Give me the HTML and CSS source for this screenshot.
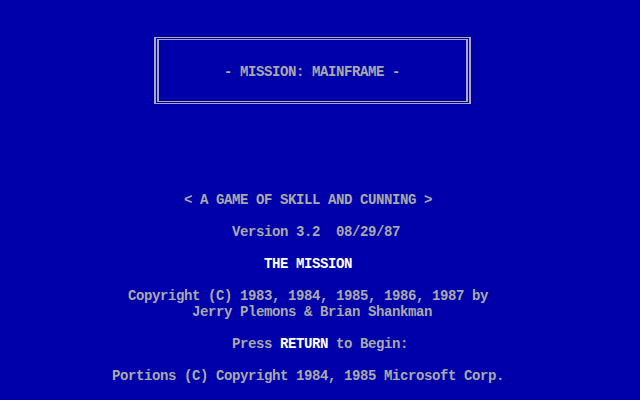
FILE: index.html
```html
<!DOCTYPE html>
<html>
<head>
<meta charset="utf-8">
<link rel="stylesheet" href="styles.css">
</head>
<body>
<div class="screen">
  <div class="box">
    <div class="box-inner">
      <div class="title">- MISSION: MAINFRAME -</div>
    </div>
  </div>
  <div class="text">
    <div class="line c23">&lt; A GAME OF SKILL AND CUNNING &gt;</div>
    <div class="line gap c29">Version 3.2  08/29/87</div>
    <div class="line gap c33"><span class="hi">THE MISSION</span></div>
    <div class="line gap c16">Copyright (C) 1983, 1984, 1985, 1986, 1987 by</div>
    <div class="line c24">Jerry Plemons &amp; Brian Shankman</div>
    <div class="line gap c29"><span>Press </span><span class="hi">RETURN</span><span> to Begin:</span></div>
    <div class="line gap c14">Portions (C) Copyright 1984, 1985 Microsoft Corp.</div>
  </div>
</div>
</body>
</html>
```
FILE: styles.css
```css
html, body {
  margin: 0;
  padding: 0;
  background: #0000aa;
}
.screen {
  width: 640px;
  height: 400px;
  background: #0000aa;
  color: #aaaaaa;
  font-family: "Liberation Mono", "DejaVu Sans Mono", monospace;
  font-size: 14px;
  letter-spacing: -0.4px;
  font-weight: bold;
  line-height: 16px;
  padding-top: 37px;
  box-sizing: border-box;
  overflow: hidden;
}
.box {
  margin-left: 154px;
  width: 317px;
  height: 67px;
  box-sizing: border-box;
  border-style: solid;
  border-color: #aaaaaa;
  border-width: 1px 2px;
  padding: 1px;
}
.box-inner {
  height: 100%;
  box-sizing: border-box;
  border-style: solid;
  border-color: #aaaaaa;
  border-width: 1px 2px;
  padding-top: 24px;
  padding-left: 65px;
}
.title {
  white-space: pre;
  height: 16px;
}
.text {
  margin-top: 88px;
  display: flex;
  flex-direction: column;
}
.line {
  white-space: pre;
  height: 16px;
}
.gap { margin-top: 16px; }
.c14 { padding-left: 112px; }
.c16 { padding-left: 128px; }
.c23 { padding-left: 184px; }
.c24 { padding-left: 192px; }
.c29 { padding-left: 232px; }
.c33 { padding-left: 264px; }
.hi {
  color: #ffffff;
}
```
